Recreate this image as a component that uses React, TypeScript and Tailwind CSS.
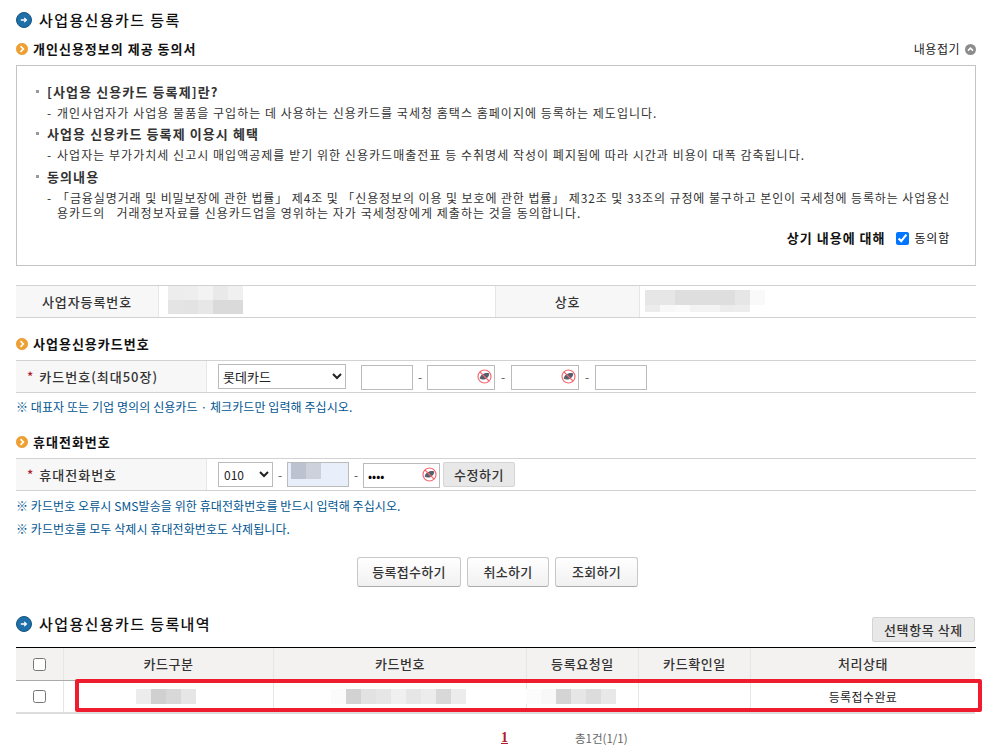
import React from 'react';

// blurred (masked) values in the screenshot: rows of grey levels
const Mosaic = ({ rows, w = 15, h = 15 }: { rows: string[][]; w?: number; h?: number }) => (
  <div className="flex flex-col">
    {rows.map((row, i) => (
      <div key={i} className="flex">
        {row.map((c, j) => (
          <div key={j} style={{ width: w, height: h, backgroundColor: c }} />
        ))}
      </div>
    ))}
  </div>
);

const BlueIcon = () => (
  <svg width="16" height="16" viewBox="0 0 16 16" className="shrink-0">
    <circle cx="8" cy="8" r="7.5" fill="#1f6fa8" />
    <circle cx="8" cy="8" r="7.5" fill="none" stroke="#14527f" strokeWidth="1" />
    <path d="M4.8 8h5.4M8.2 5.9 10.4 8 8.2 10.1" fill="none" stroke="#fff" strokeWidth="1.3" />
  </svg>
);

const OrangeIcon = () => (
  <svg width="12" height="12" viewBox="0 0 12 12" className="shrink-0">
    <circle cx="6" cy="6" r="5.7" fill="#f0a030" stroke="#e48e1c" strokeWidth="0.6" />
    <path d="M4.5 3.2 7.3 6 4.5 8.8" fill="none" stroke="#fff" strokeWidth="1.7" />
  </svg>
);

const EyeOff = () => (
  <svg width="15" height="15" viewBox="0 0 15 15" className="absolute right-[3px] top-[5px]">
    <circle cx="7.5" cy="7.5" r="6.5" fill="#fff" stroke="#f46a72" strokeWidth="1.2" />
    <path d="M2.6 9.6C3.4 5.2 8.4 2.8 12.2 4.4 12.6 8.6 6.6 12.4 2.6 9.6Z" fill="#55606c" />
    <path d="M3 3 12 12" stroke="#f46a72" strokeWidth="1.1" />
  </svg>
);

const Title = ({ children }: { children: React.ReactNode }) => (
  <div className="flex items-center gap-[7px] text-[15px] font-medium leading-[20px] tracking-[1.4px] text-[#111]">
    <BlueIcon />
    <span>{children}</span>
  </div>
);

const SubTitle = ({ children }: { children: React.ReactNode }) => (
  <div className="flex items-center gap-[5px] text-[13px] font-bold leading-[18px] tracking-[1px] text-[#111]">
    <OrangeIcon />
    <span>{children}</span>
  </div>
);

const Heading = ({ children }: { children: React.ReactNode }) => (
  <div className="flex items-center text-[13px] font-bold leading-[21px] tracking-[1.1px] text-[#333]">
    <span className="mr-[8px] h-[3px] w-[3px] bg-[#999]" />
    {children}
  </div>
);

const Desc = ({ children }: { children: React.ReactNode }) => (
  <div className="mt-[3px] flex pl-[11px] text-[12px] leading-[15px] tracking-[1.03px] text-[#333]">
    <span className="w-[10px] shrink-0">-</span>
    <div>{children}</div>
  </div>
);

const Note = ({ children }: { children: React.ReactNode }) => (
  <p className="text-[12px] leading-[16px] tracking-[0.08px] text-[#00558f]">※ {children}</p>
);

const Field = ({ w, value, type = 'text', eye }: { w: string; value?: string; type?: string; eye?: boolean }) => (
  <div className={`relative h-[25px] ${w}`}>
    <input
      type={type}
      readOnly
      value={value ?? ''}
      className="h-full w-full border border-[#bbb] bg-white px-1 text-[12px]"
    />
    {eye && <EyeOff />}
  </div>
);

const Dash = ({ w }: { w: string }) => <span className={`${w} text-center text-[12px] text-[#555]`}>-</span>;

const ActionButton = ({ w, children }: { w: string; children: React.ReactNode }) => (
  <button className={`h-[30px] ${w} rounded-[3px] border border-[#c8c8c8] border-b-[#aaa] bg-gradient-to-b from-white to-[#f1f1f1] text-[13px] font-medium tracking-[0.3px] text-[#333]`}>
    {children}
  </button>
);

const GrayButton = ({ w, children }: { w: string; children: React.ReactNode }) => (
  <button className={`h-[25px] ${w} rounded-[2px] border border-[#d4d4d4] bg-[#e8e8e8] text-[13px] font-medium tracking-[0.6px] text-[#333]`}>
    {children}
  </button>
);

const FormRow = ({ label, children }: { label: string; children: React.ReactNode }) => (
  <div className="flex h-[33px] border-y border-[#d2d2d2]">
    <div className="flex w-[191px] items-center border-r border-[#e6e6e6] bg-[#f7f7f7] pl-[11px] text-[13px] font-medium tracking-[1px] text-[#333]">
      <span className="mr-[5px] text-[#b01c2e]">*</span>
      {label}
    </div>
    <div className="flex flex-1 items-center pl-[11px]">{children}</div>
  </div>
);

const labelCell = 'flex items-center justify-center bg-[#f7f7f7] text-[13px] font-medium tracking-[0.9px] text-[#333]';
const headerCell = 'flex items-center justify-center border-r border-[#e6e6e6] text-[13px] font-medium tracking-[0.6px] text-[#333]';
const bodyCell = 'flex items-center justify-center border-r border-[#e6e6e6] text-[12px] tracking-[0.4px] text-[#222]';

const App: React.FC = () => {
  return (
    <div className="relative h-[753px] w-[992px] overflow-hidden bg-white pl-4 font-['Noto_Sans_CJK_KR','Liberation_Sans',sans-serif]">
      <div className="w-[960px] pt-[10px]">
        <Title>사업용신용카드 등록</Title>

        <div className="mt-[10px] flex items-center justify-between">
          <SubTitle>개인신용정보의 제공 동의서</SubTitle>
          <div className="flex items-center gap-[5px] text-[12px] leading-[18px] tracking-[0.5px] text-[#222]">
            내용접기
            <svg width="11" height="11" viewBox="0 0 11 11">
              <circle cx="5.5" cy="5.5" r="5.5" fill="#8c8c8c" />
              <path d="M3 6.6 5.5 4.1 8 6.6" fill="none" stroke="#fff" strokeWidth="1.5" />
            </svg>
          </div>
        </div>

        <div className="mt-[7px] h-[201px] border border-[#c4c4c4] px-[19px] pt-[15px]">
          <Heading>[사업용 신용카드 등록제]란?</Heading>
          <Desc>개인사업자가 사업용 물품을 구입하는 데 사용하는 신용카드를 국세청 홈택스 홈페이지에 등록하는 제도입니다.</Desc>
          <div className="mt-[3px]">
            <Heading>사업용 신용카드 등록제 이용시 혜택</Heading>
          </div>
          <Desc>사업자는 부가가치세 신고시 매입액공제를 받기 위한 신용카드매출전표 등 수취명세 작성이 폐지됨에 따라 시간과 비용이 대폭 감축됩니다.</Desc>
          <div className="mt-[4px]">
            <Heading>동의내용</Heading>
          </div>
          <Desc>
            <span className="whitespace-nowrap tracking-[0.9px]">
              「금융실명거래 및 비밀보장에 관한 법률」 제4조 및 「신용정보의 이용 및 보호에 관한 법률」 제32조 및 33조의 규정에 불구하고 본인이 국세청에 등록하는 사업용신
            </span>
            <br />
            용카드의 &nbsp; 거래정보자료를 신용카드업을 영위하는 자가 국세청장에게 제출하는 것을 동의합니다.
          </Desc>
          <div className="mt-[8px] flex items-center justify-end pr-[6px] leading-[20px] text-[#111]">
            <span className="text-[13px] font-bold tracking-[1px]">상기 내용에 대해</span>
            <input type="checkbox" defaultChecked className="ml-[11px] mr-[5px] h-[13px] w-[13px]" />
            <span className="text-[12px] tracking-[0.8px]">동의함</span>
          </div>
        </div>

        <div className="mt-[19px] flex h-[33px] border-y border-[#d2d2d2]">
          <div className={`${labelCell} w-[143px] border-r border-[#e6e6e6]`}>사업자등록번호</div>
          <div className="w-[336px] pl-[9px]">
            <Mosaic rows={[['#ededed', '#eeeeee', '#f3f3f3', '#e9e9e9', '#f0f0f0'], ['#e4e4e4', '#e3e3e3', '#e7e7e7', '#dadada', '#dadada']]} w={15} h={14} />
          </div>
          <div className={`${labelCell} w-[145px] border-x border-[#e6e6e6]`}>상호</div>
          <div className="flex-1 pl-[5px] pt-[4px]">
            <Mosaic rows={[['#e6e6e6', '#e6e6e6', '#dedede', '#dedede', '#dedede', '#dedede', '#e6e6e6', '#f9f9f9']]} w={15} h={15} />
            <Mosaic rows={[['#ececec', '#f8f8f8', '#fafafa', '#f3f3f3', '#f3f3f3', '#ececec', '#ededed']]} w={15} h={7} />
          </div>
        </div>

        <div className="mt-[17px]">
          <SubTitle>사업용신용카드번호</SubTitle>
        </div>
        <div className="mt-[7px]">
          <FormRow label="카드번호(최대50장)">
            <select className="h-[25px] w-[128px] border border-[#bbb] bg-white text-[13px] text-[#222]">
              <option>롯데카드</option>
            </select>
            <div className="w-[15px]" />
            <Field w="w-[52px]" />
            <Dash w="w-[14px]" />
            <Field w="w-[68px]" eye />
            <Dash w="w-[16px]" />
            <Field w="w-[68px]" eye />
            <Dash w="w-[16px]" />
            <Field w="w-[52px]" />
          </FormRow>
        </div>
        <div className="mt-[6px]">
          <Note>대표자 또는 기업 명의의 신용카드 · 체크카드만 입력해 주십시오.</Note>
        </div>

        <div className="mt-[18px]">
          <SubTitle>휴대전화번호</SubTitle>
        </div>
        <div className="mt-[7px]">
          <FormRow label="휴대전화번호">
            <select className="h-[25px] w-[55px] border border-[#bbb] bg-white pl-[1px] text-[12px] text-[#222]">
              <option>010</option>
            </select>
            <Dash w="w-[14px]" />
            <div className="h-[25px] w-[62px] border border-[#bbb] bg-[#e8effb] pl-[3px]">
              <Mosaic rows={[['#bcc2cf', '#ccd1dc'], ['#bcc2cf', '#ccd1dc']]} w={15} h={8} />
            </div>
            <Dash w="w-[14px]" />
            <Field w="w-[77px]" value="1234" type="password" eye />
            <div className="w-[3px]" />
            <GrayButton w="w-[72px]">수정하기</GrayButton>
          </FormRow>
        </div>
        <div className="mt-[7px]">
          <Note>카드번호 오류시 SMS발송을 위한 휴대전화번호를 반드시 입력해 주십시오.</Note>
        </div>
        <div className="mt-[7px]">
          <Note>카드번호를 모두 삭제시 휴대전화번호도 삭제됩니다.</Note>
        </div>

        <div className="mt-[20px] flex justify-center gap-[6px] pl-[3px]">
          <ActionButton w="w-[104px]">등록접수하기</ActionButton>
          <ActionButton w="w-[82px]">취소하기</ActionButton>
          <ActionButton w="w-[83px]">조회하기</ActionButton>
        </div>

        <div className="mt-[27px] flex h-[28px] items-start justify-between">
          <Title>사업용신용카드 등록내역</Title>
          <div className="self-end pr-[1px]">
            <GrayButton w="w-[103px]">선택항목 삭제</GrayButton>
          </div>
        </div>

        <div className="mt-[5px] border-t border-black">
          <div className="flex h-[33px] w-[959px] border-b border-[#aaa] bg-[#f3f2f0]">
            <div className={`${headerCell} w-[48px]`}>
              <input type="checkbox" className="h-[13px] w-[13px]" />
            </div>
            <div className={`${headerCell} w-[210px]`}>카드구분</div>
            <div className={`${headerCell} w-[253px]`}>카드번호</div>
            <div className={`${headerCell} w-[112px]`}>등록요청일</div>
            <div className={`${headerCell} w-[112px]`}>카드확인일</div>
            <div className={`${headerCell} flex-1 border-r-0`}>처리상태</div>
          </div>
          <div className="flex h-[33px] w-[959px] border-b-2 border-[#ddd]">
            <div className={`${bodyCell} w-[48px]`}>
              <input type="checkbox" className="h-[13px] w-[13px]" />
            </div>
            <div className={`${bodyCell} w-[210px] pr-[6px]`}>
              <Mosaic rows={[['#ececec', '#d0d0d0', '#d8d8d8', '#e6e6e6']]} />
            </div>
            <div className={`${bodyCell} w-[253px] pr-[4px]`}>
              <Mosaic rows={[['#fbfbfb', '#d2d2d2', '#e2e2e2', '#e6e6e6', '#f0f0f0', '#e6e6e6', '#ececec', '#d8d8d8', '#ececec']]} />
            </div>
            <div className={`${bodyCell} w-[112px] pr-[24px]`}>
              <Mosaic rows={[['#fcfcfc', '#f8f8f8', '#d4d4d4', '#e6e6e6', '#dcdcdc', '#e8e8e8']]} />
            </div>
            <div className={`${bodyCell} w-[112px]`} />
            <div className={`${bodyCell} flex-1 border-r-0`}>등록접수완료</div>
          </div>
        </div>

        <div className="relative mt-[15px] h-[18px] text-[11.5px] leading-[18px]">
          <a className="absolute left-[485px] font-['Liberation_Serif',serif] text-[14px] font-bold text-[#b01c2e] underline">1</a>
          <span className="absolute left-[559px] text-[#666]">총1건(1/1)</span>
        </div>
      </div>

      {/* red annotation box drawn over the row */}
      <div className="absolute left-[75px] top-[679px] h-[33px] w-[907px] rounded-[2px] border-4 border-[#ee1c2e]" />
    </div>
  );
};

export default App;
